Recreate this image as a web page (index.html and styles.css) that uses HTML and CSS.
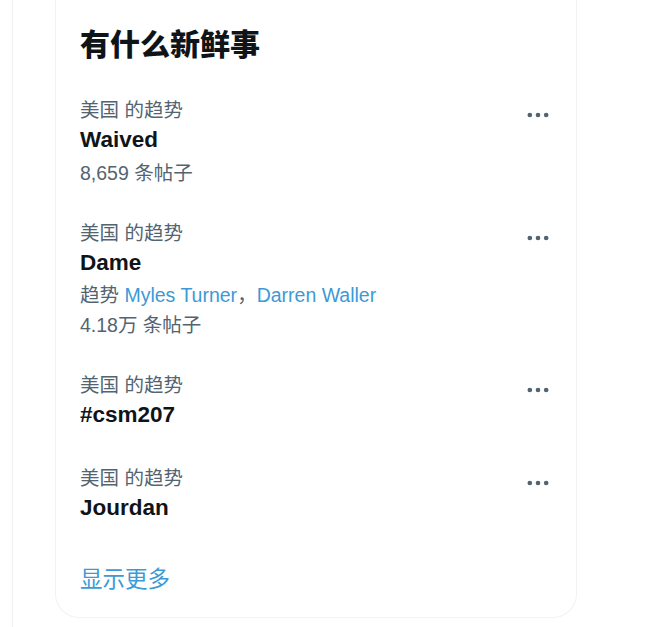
FILE: index.html
```html
<!DOCTYPE html>
<html lang="zh-CN">
<head>
<meta charset="utf-8">
<title>有什么新鲜事</title>
<link rel="stylesheet" href="styles.css">
</head>
<body>
<div class="page">
  <div class="rail"></div>
  <section class="card">
    <h2 class="title">有什么新鲜事</h2>

    <div class="trend">
      <div class="trend-body">
        <div class="meta">美国 的趋势</div>
        <div class="name">Waived</div>
        <div class="count">8,659 条帖子</div>
      </div>
      <svg class="more" viewBox="0 0 24 24"><circle cx="5" cy="12" r="2"/><circle cx="12" cy="12" r="2"/><circle cx="19" cy="12" r="2"/></svg>
    </div>

    <div class="trend">
      <div class="trend-body">
        <div class="meta">美国 的趋势</div>
        <div class="name">Dame</div>
        <div class="related">趋势 <span class="link">Myles Turner</span>，<span class="link">Darren Waller</span></div>
        <div class="count">4.18万 条帖子</div>
      </div>
      <svg class="more" viewBox="0 0 24 24"><circle cx="5" cy="12" r="2"/><circle cx="12" cy="12" r="2"/><circle cx="19" cy="12" r="2"/></svg>
    </div>

    <div class="trend">
      <div class="trend-body">
        <div class="meta">美国 的趋势</div>
        <div class="name">#csm207</div>
      </div>
      <svg class="more" viewBox="0 0 24 24"><circle cx="5" cy="12" r="2"/><circle cx="12" cy="12" r="2"/><circle cx="19" cy="12" r="2"/></svg>
    </div>

    <div class="trend">
      <div class="trend-body">
        <div class="meta">美国 的趋势</div>
        <div class="name">Jourdan</div>
      </div>
      <svg class="more" viewBox="0 0 24 24"><circle cx="5" cy="12" r="2"/><circle cx="12" cy="12" r="2"/><circle cx="19" cy="12" r="2"/></svg>
    </div>

    <div class="show-more">显示更多</div>
  </section>
</div>
</body>
</html>
```

FILE: styles.css
```css
* { box-sizing: border-box; }

html, body {
  margin: 0;
  padding: 0;
  background: #ffffff;
}

body {
  font-family: "Liberation Sans", "Noto Sans CJK SC", sans-serif;
  color: #0f1419;
}

.page {
  display: flex;
  align-items: flex-start;
  height: 627px;
  overflow: hidden;
}

.rail {
  width: 1px;
  height: 627px;
  margin-left: 12px;
  background: #eef0f2;
  flex: none;
}

.card {
  margin-left: 42px;
  width: 522px;
  border: 1px solid #eff3f4;
  border-top: none;
  border-radius: 0 0 24px 24px;
  display: flex;
  flex-direction: column;
}

.title {
  margin: 0;
  padding: 27px 24px 17px;
  font-size: 30px;
  line-height: 36px;
  font-weight: 800;
  color: #0f1419;
}

.trend {
  display: flex;
  justify-content: space-between;
  align-items: flex-start;
  padding: 18px 24px;
}

.trend-body {
  display: flex;
  flex-direction: column;
}

.meta, .count, .related {
  font-size: 19.5px;
  line-height: 24px;
  color: #536471;
}

.name {
  margin-top: 3px;
  font-size: 22.5px;
  line-height: 30px;
  font-weight: 700;
  color: #0f1419;
}

.related {
  margin-top: 5px;
}

.count {
  margin-top: 6px;
}

.link {
  color: #3c9ad6;
}

.more {
  width: 28px;
  height: 28px;
  margin-top: 3px;
  fill: #536471;
  flex: none;
}

.show-more {
  padding: 24px 24px 22px;
  font-size: 22.5px;
  line-height: 30px;
  color: #3c9ad6;
}
```
